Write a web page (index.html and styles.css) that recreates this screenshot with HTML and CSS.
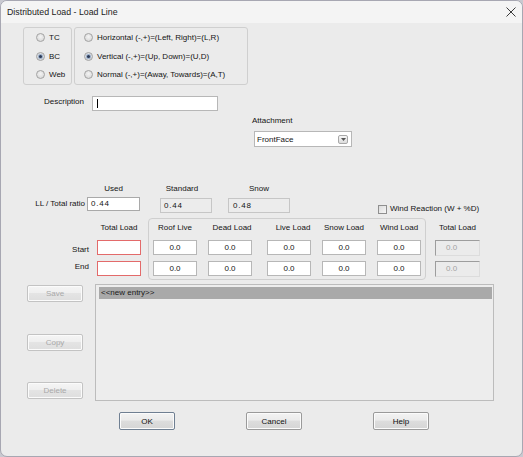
FILE: index.html
```html
<!DOCTYPE html>
<html>
<head>
<meta charset="utf-8">
<title>Distributed Load - Load Line</title>
<link rel="stylesheet" href="styles.css">
</head>
<body>
<div class="window">
  <div class="titlebar">
    <span class="title">Distributed Load - Load Line</span>
    <svg class="close" width="10" height="10" viewBox="0 0 10 10"><path d="M0.5 0.5L9.5 9.5M9.5 0.5L0.5 9.5"/></svg>
  </div>
  <div class="client">
    <div class="radio-row">
      <div class="group g1">
        <div class="radio"><span class="dot"></span><span>TC</span></div>
        <div class="radio"><span class="dot on"></span><span>BC</span></div>
        <div class="radio"><span class="dot"></span><span>Web</span></div>
      </div>
      <div class="group g2">
        <div class="radio"><span class="dot"></span><span>Horizontal (-,+)=(Left, Right)=(L,R)</span></div>
        <div class="radio"><span class="dot on"></span><span>Vertical (-,+)=(Up, Down)=(U,D)</span></div>
        <div class="radio"><span class="dot"></span><span>Normal (-,+)=(Away, Towards)=(A,T)</span></div>
      </div>
    </div>

    <div class="desc-row">
      <span class="desc-lbl">Description</span>
      <div class="tb desc-input"><span class="caret"></span></div>
    </div>

    <div class="attach">
      <span class="attach-lbl">Attachment</span>
      <div class="combo">
        <span class="combo-text">FrontFace</span>
        <span class="combo-btn"><svg width="5" height="3" viewBox="0 0 5 3"><path d="M0 0H5L2.5 3Z"/></svg></span>
      </div>
    </div>

    <div class="ratio-row">
      <span class="ratio-lbl">LL / Total ratio</span>
      <div class="rcol used"><span class="rhdr">Used</span><div class="tb num">0.44</div></div>
      <div class="rcol std"><span class="rhdr">Standard</span><div class="tb ro num">0.44</div></div>
      <div class="rcol snow"><span class="rhdr">Snow</span><div class="tb ro num">0.48</div></div>
      <div class="check"><span class="box"></span><span>Wind Reaction (W + %D)</span></div>
    </div>

    <div class="loads">
      <div class="rowlbls"><span class="lbl-start">Start</span><span class="lbl-end">End</span></div>
      <div class="lcol w44 side"><span class="hdr">Total Load</span><div class="tb err"></div><div class="tb err second"></div></div>
      <div class="loadbox">
        <div class="lcol c55"><span class="hdr">Roof Live</span><div class="tb val">0.0</div><div class="tb val second">0.0</div></div>
        <div class="lcol c59"><span class="hdr shift2">Dead Load</span><div class="tb val">0.0</div><div class="tb val second">0.0</div></div>
        <div class="lcol c55"><span class="hdr shift4">Live Load</span><div class="tb val">0.0</div><div class="tb val second">0.0</div></div>
        <div class="lcol c55"><span class="hdr">Snow Load</span><div class="tb val">0.0</div><div class="tb val second">0.0</div></div>
        <div class="lcol c44"><span class="hdr">Wind Load</span><div class="tb val">0.0</div><div class="tb val second">0.0</div></div>
      </div>
      <div class="lcol w45 side rtotal"><span class="hdr">Total Load</span><div class="tb dis">0.0</div><div class="tb dis second">0.0</div></div>
    </div>

    <div class="entries">
      <div class="side-btns">
        <button class="btn" disabled>Save</button>
        <button class="btn" disabled>Copy</button>
        <button class="btn" disabled>Delete</button>
      </div>
      <div class="list">
        <div class="item sel">&lt;&lt;new entry&gt;&gt;</div>
      </div>
    </div>

    <div class="actions">
      <button class="btn default">OK</button>
      <button class="btn">Cancel</button>
      <button class="btn">Help</button>
    </div>
  </div>
</div>
</body>
</html>
```

FILE: styles.css
```css
* { box-sizing: border-box; }

html, body {
  margin: 0;
  padding: 0;
  background: #c9c9d0;
}

body {
  width: 523px;
  height: 457px;
  overflow: hidden;
  font-family: "Liberation Sans", Arial, sans-serif;
  font-size: 8px;
  color: #141414;
}

.window {
  width: 523px;
  height: 457px;
  border: 1px solid #a7a7b2;
  border-radius: 7px;
  background: #ebebeb;
  overflow: hidden;
  display: flex;
  flex-direction: column;
}

.titlebar {
  height: 22px;
  flex: none;
  background: #f4f4f4;
  display: flex;
  align-items: center;
  justify-content: space-between;
  padding: 0 6px 0 6px;
}

.title {
  font-size: 8.8px;
  color: #1b1b1b;
}

.close path {
  stroke: #3a3a3a;
  stroke-width: 1;
  fill: none;
}

.client {
  flex: 1;
  display: flex;
  flex-direction: column;
}

/* radio groups */
.radio-row {
  display: flex;
  margin: 4px 0 0 22px;
}

.group {
  height: 58px;
  border: 1px solid #cfcfcf;
  border-radius: 3px;
  display: flex;
  flex-direction: column;
  justify-content: center;
}

.g1 { width: 49px; padding-left: 12px; }
.g2 { width: 174px; margin-left: 2px; padding-left: 9px; }

.radio {
  height: 19px;
  display: flex;
  align-items: center;
  gap: 4px;
}

.dot {
  width: 9px;
  height: 9px;
  border-radius: 50%;
  border: 1px solid #a3a3a3;
  background: radial-gradient(circle at 50% 40%, #f4f4f4 0%, #dcdcdc 70%, #cfcfcf 100%);
  flex: none;
  position: relative;
}

.dot.on::after {
  content: "";
  position: absolute;
  left: 2px;
  top: 2px;
  width: 3px;
  height: 3px;
  border-radius: 50%;
  background: #2d3b55;
  box-shadow: 0 0 1px 1px #8fa6c6;
}

/* text boxes */
.tb {
  height: 15px;
  background: #fff;
  border: 1px solid #b7b7b7;
  line-height: 13px;
}

.num {
  padding-left: 3px;
  letter-spacing: 0.8px;
}

/* description */
.desc-row {
  display: flex;
  align-items: flex-start;
  margin-top: 11px;
}

.desc-lbl {
  width: 83px;
  text-align: right;
  line-height: 12px;
}

.desc-input {
  margin-left: 8px;
  width: 126px;
  position: relative;
}

.caret {
  position: absolute;
  left: 4px;
  top: 2px;
  width: 1px;
  height: 9px;
  background: #000;
}

/* attachment */
.attach {
  display: flex;
  flex-direction: column;
  align-items: flex-start;
  margin-top: 5px;
}

.attach-lbl {
  margin-left: 251px;
  line-height: 10px;
}

.combo {
  margin: 5px 0 0 253px;
  width: 98px;
  height: 16px;
  background: #fff;
  border: 1px solid #b7b7b7;
  display: flex;
  align-items: center;
  justify-content: space-between;
  padding: 0 3px 0 2px;
}

.combo-btn {
  width: 10px;
  height: 9px;
  border: 1px solid #a8a8a8;
  border-radius: 2px;
  background: linear-gradient(#f6f6f6, #dcdcdc);
  display: flex;
  align-items: center;
  justify-content: center;
}

.combo-btn path { fill: #555; }

/* ratio row */
.ratio-row {
  display: flex;
  align-items: flex-end;
  margin-top: 37px;
}

.ratio-lbl {
  width: 84px;
  text-align: right;
  line-height: 14px;
  margin-bottom: 2px;
}

.rcol {
  display: flex;
  flex-direction: column;
}

.rhdr {
  line-height: 10px;
  text-align: center;
  margin-bottom: 3px;
}

.used { margin-left: 2px; width: 53px; margin-bottom: 2px; }
.used .tb { height: 14px; line-height: 12px; border-color: #a9a9a9; }
.std { margin-left: 20px; width: 52px; }
.std .rhdr { padding-right: 8px; margin-bottom: 4px; }
.snow { margin-left: 16px; width: 62px; }
.snow .rhdr { margin-bottom: 4px; }
.snow .tb { padding-left: 4px; }

.ro {
  background: #ececec;
  border-color: #c6c6c6;
}

.check {
  margin-left: 88px;
  margin-bottom: -1px;
  display: flex;
  align-items: center;
  gap: 3px;
  line-height: 10px;
}

.box {
  width: 9px;
  height: 9px;
  border: 1px solid #8f8f8f;
  background: linear-gradient(135deg, #dcdcdc, #f6f6f6);
}

/* loads */
.loads {
  display: flex;
  align-items: flex-start;
  margin-top: 5px;
}

.rowlbls {
  width: 88px;
  display: flex;
  flex-direction: column;
  align-items: flex-end;
  padding-top: 24px;
}

.lbl-start { line-height: 16px; }
.lbl-end { line-height: 16px; margin-top: 1px; }

.lcol {
  display: flex;
  flex-direction: column;
}

.lcol .hdr {
  height: 18px;
  line-height: 18px;
  text-align: center;
  white-space: nowrap;
}

.lcol .tb {
  margin-top: 3px;
  width: 44px;
}

.lcol .tb.second { margin-top: 6px; }

.side { padding-top: 1px; }

.w44 { margin-left: 8px; width: 44px; }

.err { border-color: #e36a6a; }

.val { text-align: center; }

.loadbox {
  margin-left: 7px;
  width: 278px;
  height: 62px;
  border: 1px solid #cfcfcf;
  border-radius: 4px;
  padding-left: 4px;
  display: flex;
}

.c55 { width: 55px; }
.c59 { width: 59px; }
.c44 { width: 44px; }
.c55 .hdr, .c59 .hdr, .c44 .hdr { width: 44px; }
.shift2 { position: relative; left: 2px; }
.shift4 { position: relative; left: 4px; }

.w45 { margin-left: 9px; width: 45px; }
.rtotal .tb { width: 45px; height: 16px; }
.rtotal .tb.second { margin-top: 5px; }

.dis {
  background: #ebebeb;
  border-top: 1px solid #9d9d9d;
  border-left: 1px solid #9d9d9d;
  border-right: 1px solid #dcdcdc;
  border-bottom: 1px solid #dcdcdc;
  color: #a3a3a3;
  padding-left: 10px;
  line-height: 14px;
}

/* entries */
.entries {
  display: flex;
  margin-top: 4px;
}

.side-btns {
  margin-left: 26px;
  width: 56px;
  height: 117px;
  padding: 1px 0 2px;
  display: flex;
  flex-direction: column;
  justify-content: space-between;
}

.list {
  margin-left: 12px;
  width: 399px;
  height: 117px;
  border: 1px solid #bcbcbc;
  background: #ededed;
  padding: 2px 1px 0 3px;
}

.item {
  height: 12px;
  line-height: 12px;
  padding-left: 2px;
}

.sel { background: #a9a9a9; color: #1a1a1a; }

/* buttons */
.btn {
  width: 56px;
  height: 17px;
  padding: 0;
  font-family: inherit;
  font-size: 8px;
  color: #111;
  border: 1px solid #9a9a9a;
  border-radius: 2px;
  background: linear-gradient(#f3f3f3 0%, #ebebeb 45%, #dddddd 50%, #d5d5d5 100%);
  box-shadow: inset 0 0 0 1px #fbfbfb;
}

.btn:disabled {
  color: #a9a9a9;
  border-color: #c3c3c3;
  background: linear-gradient(#f5f5f5 0%, #efefef 45%, #e4e4e4 50%, #dedede 100%);
}

.actions {
  display: flex;
  gap: 71px;
  margin: 11px 0 0 118px;
}

.actions .btn { height: 18px; }

.default { border-color: #6f7f92; }
```
